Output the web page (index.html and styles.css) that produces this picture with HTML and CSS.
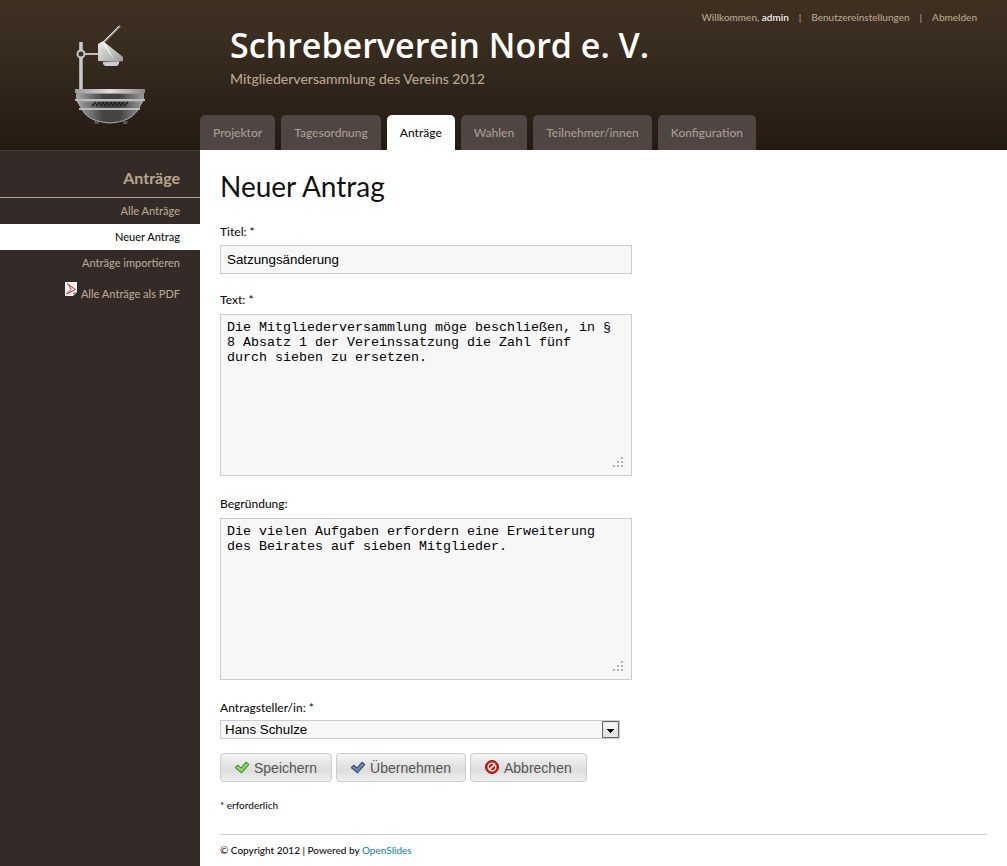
FILE: index.html
```html
<!DOCTYPE html>
<html lang="de">
<head>
<meta charset="utf-8">
<title>Neuer Antrag – OpenSlides</title>
<link rel="stylesheet" href="styles.css">
</head>
<body>
<header class="header">
  <a class="logo" href="#" aria-label="OpenSlides">
    <svg width="72" height="102" viewBox="0 0 72 102">
      <defs>
        <linearGradient id="metal" x1="0" x2="1" y1="0" y2="0"><stop offset="0" stop-color="#999"/><stop offset=".5" stop-color="#ddd"/><stop offset="1" stop-color="#888"/></linearGradient>
        <linearGradient id="bowl" x1="0" x2="1" y1="0" y2="0"><stop offset="0" stop-color="#a5a5a5"/><stop offset=".4" stop-color="#444"/><stop offset=".65" stop-color="#444"/><stop offset="1" stop-color="#999"/></linearGradient>
        <linearGradient id="head" x1="0" x2="1" y1="0" y2="1"><stop offset="0" stop-color="#eee"/><stop offset="1" stop-color="#999"/></linearGradient>
      </defs>
      <path d="M28 19 45 2" stroke="#999" stroke-width="2"/><path d="M28 18 44 2" stroke="#ddd" stroke-width="1"/>
      <path d="M4 18h4v48H4z" fill="url(#metal)"/>
      <path d="M10 29h14v2H10z" fill="#bbb"/>
      <circle cx="6" cy="30" r="3.500" fill="#333" stroke="#c8c8c8" stroke-width="2"/>
      <path d="M23 20 28 17 48 33v4L43 38 23 37z" fill="url(#head)"/>
      <path d="M27 19 40 37 30 19z" fill="#fff" opacity=".7"/>
      <path d="M28 38h16v2l-2 2H30l-2-2z" fill="#ccc"/>
      <path d="M19 97h5v3h-4zM48 97h5l-1 3h-4z" fill="#555"/>
      <path d="M2 77h66L62 87C57 94 49 98 35 99 21 98 12 94 8 87z" fill="url(#bowl)" stroke="#aaa"/>
      <path d="M0 65h70v4H0z" fill="url(#metal)"/>
      <path d="M1.500 69.500h67v6h-67z" fill="url(#bowl)" stroke="#999"/>
      <path d="M0 75h70v2H0zM4 84h61v2H4z" fill="#bbb"/>
      <path d="m17 82 4-4m0 4 4-4m0 4 4-4m0 4 4-4m0 4 4-4m0 4 4-4m0 4 4-4m0 4 4-4m0 4 4-4" stroke="#1c1c1c" stroke-width="1.500"/>
    </svg>
  </a>
  <div class="banner">
    <div class="top">
      <div class="brand">
        <p class="name">Schreberverein Nord e. V.</p>
        <p class="event">Mitgliederversammlung des Vereins 2012</p>
      </div>
      <div class="user">
        <span>Willkommen, <strong>admin</strong></span><span>|</span>
        <a href="#">Benutzereinstellungen</a><span>|</span>
        <a href="#">Abmelden</a>
      </div>
    </div>
    <nav class="tabs">
      <a href="#">Projektor</a>
      <a href="#">Tagesordnung</a>
      <a href="#" class="active">Anträge</a>
      <a href="#">Wahlen</a>
      <a href="#">Teilnehmer/innen</a>
      <a href="#">Konfiguration</a>
    </nav>
  </div>
</header>
<div class="page">
  <aside class="sidebar">
    <h2>Anträge</h2>
    <nav class="menu">
      <a href="#">Alle Anträge</a>
      <a href="#" class="active">Neuer Antrag</a>
      <a href="#">Anträge importieren</a>
      <a href="#" class="pdf"><svg width="14" height="16" viewBox="0 0 14 16"><path d="M1 1h12v10l-4 4H1z" fill="#f4f4f4"/><path d="M13 11 9 15v-4z" fill="#aaa"/><path d="M3 2.500 11.500 8.500 2.500 13 7 8.500 5 4" fill="none" stroke="#d22"/></svg>Alle Anträge als PDF</a>
    </nav>
  </aside>
  <main class="content">
    <h1>Neuer Antrag</h1>
    <form>
      <div class="field">
        <label for="title">Titel: <span>*</span></label>
        <input id="title" type="text" value="Satzungsänderung">
      </div>
      <div class="field">
        <label for="text">Text: <span>*</span></label>
        <div class="area">
          <textarea id="text" spellcheck="false">Die Mitgliederversammlung möge beschließen, in § 8 Absatz 1 der Vereinssatzung die Zahl fünf durch sieben zu ersetzen.</textarea>
          <svg class="grip" width="10" height="10" viewBox="0 0 10 10"><path d="M8 0h2v2H8zM4 4h2v2H4zM8 4h2v2H8zM0 8h2v2H0zM4 8h2v2H4zM8 8h2v2H8z"/></svg>
        </div>
      </div>
      <div class="field">
        <label for="reason">Begründung:</label>
        <div class="area">
          <textarea id="reason" spellcheck="false">Die vielen Aufgaben erfordern eine Erweiterung des Beirates auf sieben Mitglieder.</textarea>
          <svg class="grip" width="10" height="10" viewBox="0 0 10 10"><path d="M8 0h2v2H8zM4 4h2v2H4zM8 4h2v2H8zM0 8h2v2H0zM4 8h2v2H4zM8 8h2v2H8z"/></svg>
        </div>
      </div>
      <div class="field person">
        <label for="submitter">Antragsteller/in: <span>*</span></label>
        <div class="choice">
          <select id="submitter"><option>Hans Schulze</option></select>
          <svg class="arrow" width="17" height="17" viewBox="0 0 17 17"><path d="M.5.5h16v16H.5z" fill="#e4e4e4" stroke="#666"/><path d="M2 2h13v6H2z" fill="#f4f4f4"/><path d="M5 8h7v1h-1v1h-1v1H9v1H8v-1H7v-1H6V9H5z" fill="#000"/></svg>
        </div>
      </div>
      <div class="buttons">
        <button type="submit"><svg width="16" height="16" viewBox="0 0 16 16"><path d="m1 7.500 3-2.500 3 3L12 2l3 2.500-7.500 8.500z" fill="#7ccb55" stroke="#377d28"/><path d="m3 7 4 3.500L13 4" fill="none" stroke="#a3dd84"/></svg>Speichern</button>
        <button type="button"><svg width="16" height="16" viewBox="0 0 16 16"><path d="m1 7.500 3-2.500 3 3L12 2l3 2.500-7.500 8.500z" fill="#587ca5" stroke="#2b405b"/><path d="m3 7 4 3.500L13 4" fill="none" stroke="#7898bc"/></svg>Übernehmen</button>
        <button type="button"><svg width="16" height="16" viewBox="0 0 16 16"><circle cx="8" cy="7" r="6.500" fill="#c4221c" stroke="#951510"/><circle cx="8" cy="7" r="3.700" fill="#a30e0a" stroke="#e9dddd" stroke-width="1.600"/><path d="m5.500 9.500 5-5" stroke="#e9dddd" stroke-width="1.800"/></svg>Abbrechen</button>
      </div>
    </form>
    <p class="note">* erforderlich</p>
    <footer class="footer">© Copyright 2012 | Powered by <a href="#">OpenSlides</a></footer>
  </main>
</div>
</body>
</html>
```
FILE: styles.css
```css
* { box-sizing: border-box; }
body {
  margin: 0;
  min-height: 100vh;
  display: flex;
  flex-direction: column;
  background: #fff;
  color: #111;
  font-family: "Trebuchet MS", Lato, sans-serif;
  font-size: 12px;
  font-weight: 500;
  line-height: 16px;
}
a { color: inherit; text-decoration: none; }
h1, h2, p { margin: 0; }
svg { display: block; flex: none; }

.header {
  display: grid;
  grid-template-columns: 200px 1fr;
  min-height: 150px;
  background: linear-gradient(#3d3021, #3a2e20 25%, #231a12);
}
.logo { padding: 24px 0 0 75px; }
.banner { display: flex; flex-direction: column; justify-content: space-between; }
.top { display: flex; justify-content: space-between; padding: 0 30px; }
.brand { padding-top: 25px; color: #b8a58c; }
.name { color: #fff; font-family: "Trebuchet MS", "Open Sans", sans-serif; font-size: 34px; font-weight: 600; line-height: 40px; }
.event { margin-top: 4px; font-size: 14px; line-height: 20px; }
.user { display: flex; gap: 10px; padding-top: 9px; color: #b8a58c; font-size: 10px; }
.user strong { color: #fff; font-weight: 500; }
.tabs { display: flex; gap: 6px; }
.tabs a {
  height: 35px;
  padding: 0 13px;
  border-radius: 5px 5px 0 0;
  background: #4f4643;
  color: #a89d90;
  line-height: 35px;
}
.tabs .active { background: #fff; color: #111; }

.page { flex: 1; display: grid; grid-template-columns: 200px 1fr; }
.sidebar {
  background: #342b29;
  color: #b8a58c;
  border-top: 1px solid #453d3a;
  text-align: right;
}
.sidebar h2 {
  padding: 15px 20px 7px;
  border-bottom: 1px solid #b8a58c;
  font-size: 16px;
  font-weight: 700;
  line-height: 24px;
}
.menu a { display: block; height: 26px; padding: 0 20px; font-size: 11px; line-height: 26px; }
.menu .active { background: #fff; color: #111; }
.menu .pdf { display: flex; justify-content: flex-end; gap: 3px; padding-top: 5px; height: 31px; }

.content { padding: 19px 20px 0; }
h1 { font-size: 28px; font-weight: 400; line-height: 34px; }
form { margin-top: 21px; }
.field { width: 412px; max-width: 100%; margin-bottom: 20px; }
label { display: block; margin-bottom: 6px; }
.field:first-child { margin-bottom: 18px; }
.field:first-child label { margin-bottom: 5px; }
input, textarea, select {
  display: block;
  width: 100%;
  border: 1px solid #ccc;
  border-radius: 0;
  background: #f7f7f7;
  color: #000;
}
input { height: 29px; padding: 0 6px; font-family: "Liberation Sans", sans-serif; }
textarea {
  height: 162px;
  padding: 5px 20px 5px 6px;
  resize: none;
  font-family: "Liberation Mono", monospace;
  line-height: 15px;
}
.area, .choice { position: relative; }
.grip { position: absolute; right: 9px; bottom: 9px; fill: #b3b3b3; pointer-events: none; }
.person { width: 400px; margin-bottom: 14px; }
.person label { margin-bottom: 4px; }
select { height: 19px; padding: 0 4px; appearance: none; font-family: "Liberation Sans", sans-serif; }
.arrow { position: absolute; right: 1px; top: 1px; pointer-events: none; }
.buttons { display: flex; gap: 4px; }
button {
  display: flex;
  align-items: center;
  gap: 4px;
  height: 29px;
  padding: 0 14px 0 13px;
  border: 1px solid #ccc;
  border-radius: 4px;
  background: linear-gradient(#f4f4f4, #e0e0e0 50%, #ddd 60%, #f0f0f0);
  color: #555;
  font-family: "Liberation Sans", sans-serif;
  font-size: 14px;
}
.note { margin-top: 15px; font-size: 10px; }
.footer { margin-top: 21px; padding-top: 7px; border-top: 1px solid #ccc; font-size: 10px; }
.footer a { color: #2c84a8; }
```
